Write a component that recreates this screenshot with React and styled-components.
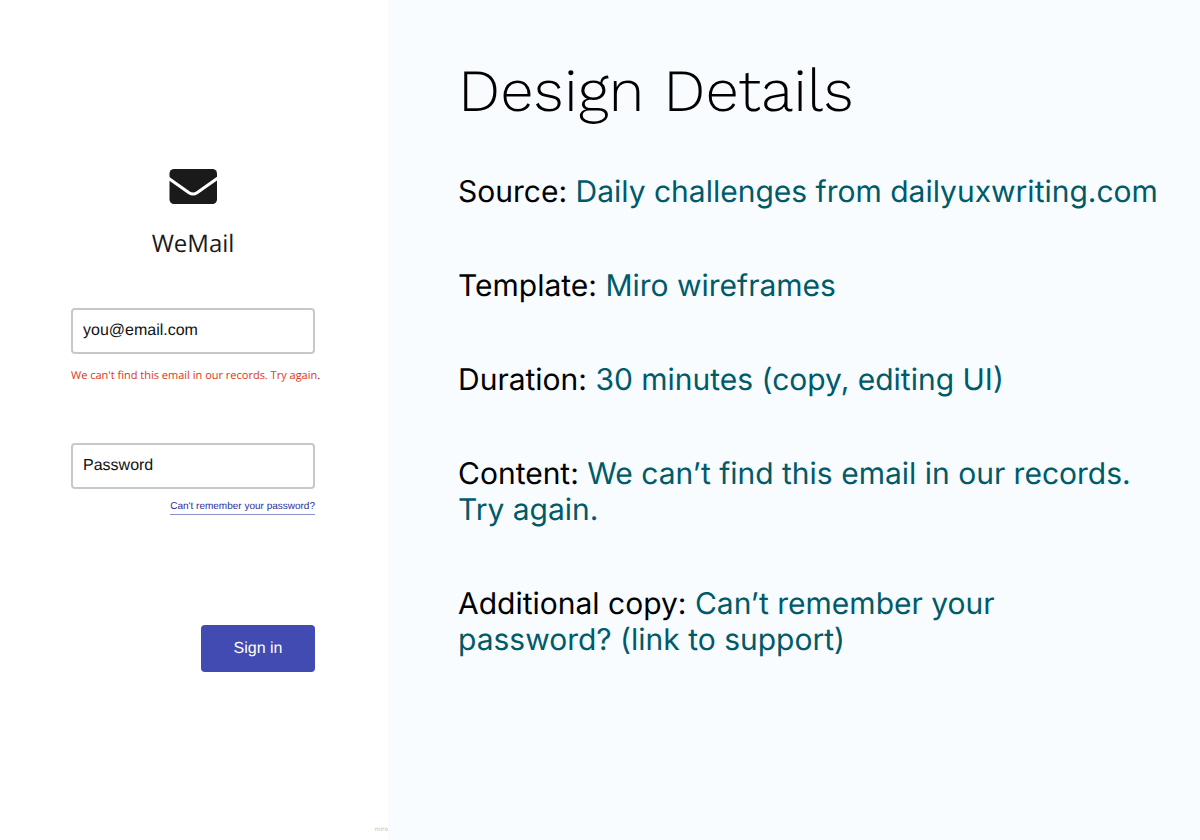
import React from 'react';
import styled, { createGlobalStyle } from 'styled-components';

const GlobalStyle = createGlobalStyle`
  * { box-sizing: border-box; }
  body { margin: 0; background: #fff; text-rendering: geometricPrecision; }
`;

const Page = styled.div`
  display: flex;
  min-height: 100vh;
`;

const LoginPane = styled.section`
  flex: 0 0 388px;
  min-width: 0;
  display: flex;
  flex-direction: column;
  background: #fff;
  padding: 168px 0 6px;
`;

const Brand = styled.div`
  display: flex;
  flex-direction: column;
  align-items: center;
  gap: 22px;
  padding-right: 2px;
`;

const BrandName = styled.p`
  margin: 0;
  font: 24px/36px "Open Sans", sans-serif;
  color: #1a1a1a;
`;

const Form = styled.form`
  display: flex;
  flex-direction: column;
  padding: 0 73px 0 71px;
  margin-top: 46px;
`;

const Field = styled.div`
  display: flex;
  flex-direction: column;
  height: 135px;
`;

const TextInput = styled.input`
  width: 100%;
  height: 46px;
  padding: 0 10px;
  border: 2px solid #c8c8c8;
  border-radius: 4px;
  background: #fff;
  color: #111;
  font: 16px "Liberation Sans", Arial, sans-serif;
  text-rendering: inherit;
  &::placeholder { color: #111; opacity: 1; }
`;

const ErrorText = styled.p`
  margin: 14px 0 0;
  white-space: nowrap;
  font: 11px/16px "Open Sans", sans-serif;
  color: #de3618;
`;

const FullStop = styled.span`
  color: #1a1a1a;
`;

const HelpLink = styled.a`
  align-self: flex-end;
  margin-top: 10px;
  border-bottom: 1px solid #8d90cc;
  white-space: nowrap;
  font: 10px/15px "Liberation Sans", Arial, sans-serif;
  color: #2c2f9c;
  text-decoration: none;
`;

const SignIn = styled.button`
  align-self: flex-end;
  width: 114px;
  height: 47px;
  margin-top: 47px;
  border: 0;
  border-radius: 4px;
  background: #414bb2;
  color: #fff;
  font: 16px "Liberation Sans", Arial, sans-serif;
  text-rendering: inherit;
`;

const Watermark = styled.small`
  margin-top: auto;
  align-self: flex-end;
  font: 6px/10px "Open Sans", sans-serif;
  color: #b8b8b8;
`;

const Details = styled.main`
  flex: 1;
  min-width: 0;
  padding: 56px 40px 40px 70px;
  background: #f8fcff;
`;

const Title = styled.h1`
  margin: 0 0 48px;
  font: 300 60px/70px "Work Sans", Inter, sans-serif;
  color: #000;
`;

const DetailList = styled.dl`
  display: flex;
  flex-direction: column;
  gap: 58px;
  margin: 0;
  font: 400 30px/36px Inter, sans-serif;
`;

const Detail = styled.div`
  white-space: pre-line;
`;

const Term = styled.dt`
  display: inline;
  color: #000;
`;

const Description = styled.dd`
  display: inline;
  margin: 0;
  color: #005a69;
`;

const details = [
  ['Source:', 'Daily challenges from dailyuxwriting.com'],
  ['Template:', 'Miro wireframes'],
  ['Duration:', '30 minutes (copy, editing UI)'],
  ['Content:', 'We can’t find this email in our records.\nTry again.'],
  ['Additional copy:', 'Can’t remember your\npassword? (link to support)'],
];

export default function App() {
  return (
    <Page>
      <GlobalStyle />
      <LoginPane>
        <Brand>
          <svg width="48" height="36" viewBox="0 0 48 36" aria-hidden="true">
            <rect x="0.5" y="1" width="47.5" height="35" rx="4.5" fill="#1a1a1a" />
            <path d="M-1 10 L20 24.8 Q24 27.4 28 24.8 L49 10" fill="none" stroke="#fff" strokeWidth="3" />
          </svg>
          <BrandName>WeMail</BrandName>
        </Brand>
        <Form onSubmit={(e) => e.preventDefault()}>
          <Field>
            <TextInput type="email" aria-label="Email" placeholder="you@email.com" />
            <ErrorText>We can't find this email in our records. Try again<FullStop>.</FullStop></ErrorText>
          </Field>
          <Field>
            <TextInput type="password" aria-label="Password" placeholder="Password" />
            <HelpLink href="#support">Can't remember your password?</HelpLink>
          </Field>
          <SignIn type="submit">Sign in</SignIn>
        </Form>
        <Watermark>miro</Watermark>
      </LoginPane>
      <Details>
        <Title>Design Details</Title>
        <DetailList>
          {details.map(([term, text]) => (
            <Detail key={term}>
              <Term>{term}</Term>{' '}
              <Description>{text}</Description>
            </Detail>
          ))}
        </DetailList>
      </Details>
    </Page>
  );
}
